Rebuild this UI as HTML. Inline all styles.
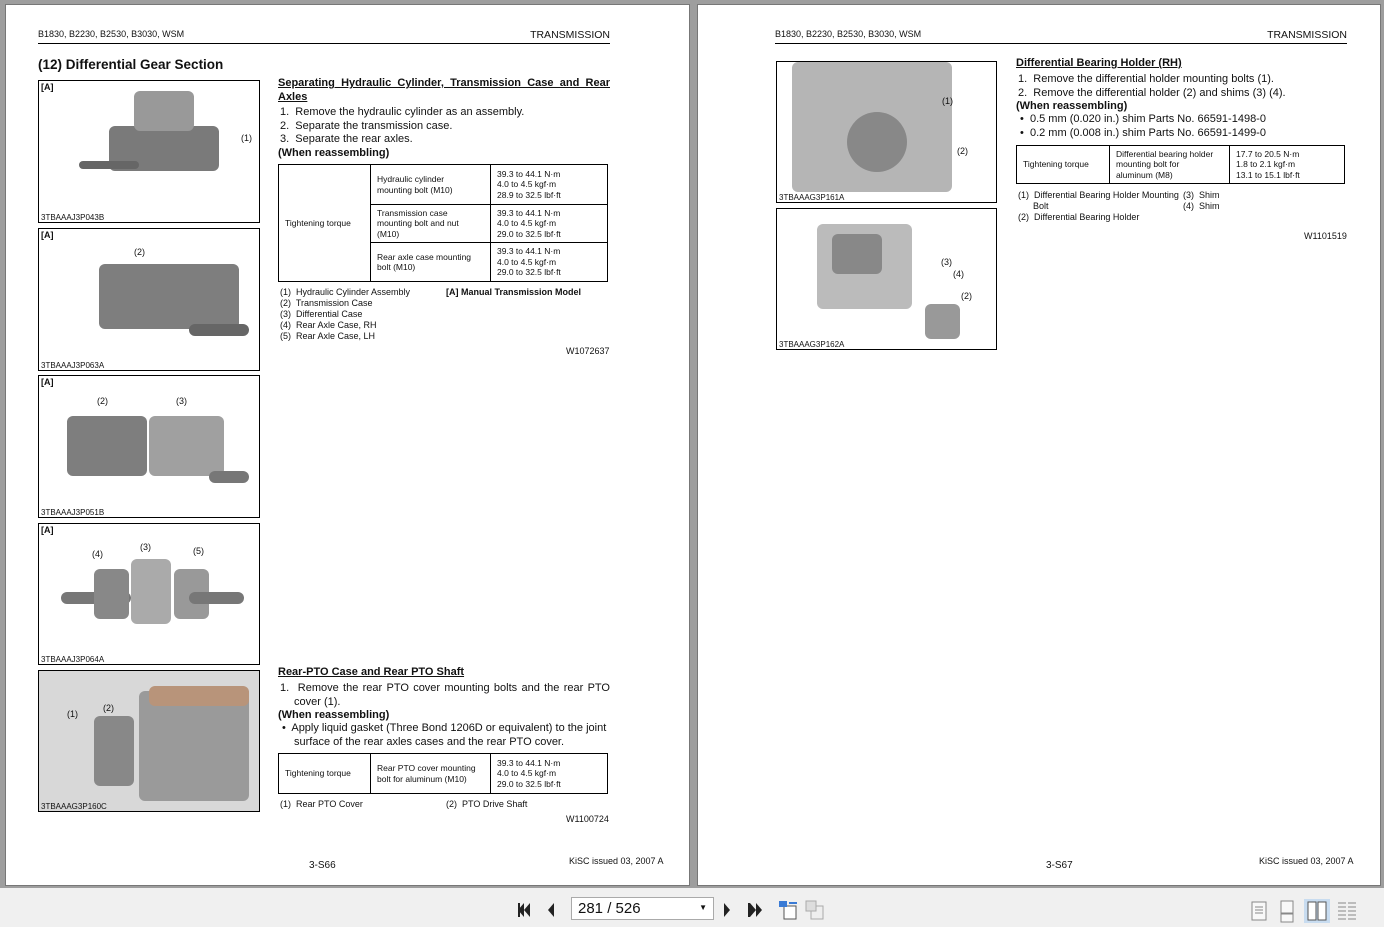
<!DOCTYPE html>
<html><head><meta charset="utf-8"><style>
*{margin:0;padding:0;box-sizing:border-box}
body{width:1384px;height:927px;background:#9e9e9e;position:relative;overflow:hidden;font-family:"Liberation Sans",Arial,sans-serif;color:#111}
.pg{position:absolute;background:#fff;top:4px;height:882px;border:1px solid #777}
.a{position:absolute;white-space:nowrap}
.s9{font-size:9px;line-height:11px}
.s10{font-size:10px}
.s11{font-size:11px;line-height:13.5px}
.hd{border-bottom:1px solid #000;height:15px}
.box{position:absolute;border:1px solid #000;background:#fff;overflow:hidden}
.box .lbl{position:absolute;left:2px;top:1px;font-size:9px;font-weight:bold}
.box .cap{position:absolute;left:2px;bottom:0;font-size:8px}
.obj{position:absolute;background:#888;border-radius:6px}
table{position:absolute;border-collapse:collapse;font-size:8.5px;line-height:10.5px}
td{border:1px solid #000;padding:2px 6px;vertical-align:middle}
u{text-decoration:underline}
.tb{position:absolute;left:0;top:888px;width:1384px;height:39px;background:#f0f0f0}
</style></head><body>

<div class="pg" style="left:5px;width:685px"></div>
<div class="pg" style="left:697px;width:684px"></div>

<!-- LEFT PAGE -->
<div class="a s9 hd" style="left:38px;top:29px;width:572px"><span>B1830, B2230, B2530, B3030, WSM</span><span style="position:absolute;right:0;top:1px;font-size:10.5px">TRANSMISSION</span></div>
<div class="a" style="left:38px;top:57px;font-size:13.5px;font-weight:bold">(12) Differential Gear Section</div>

<div class="box" style="left:38px;top:80px;width:222px;height:143px"><div class="lbl">[A]</div>
<div class="obj" style="left:70px;top:45px;width:110px;height:45px;background:#7a7a7a"></div>
<div class="obj" style="left:95px;top:10px;width:60px;height:40px;background:#999"></div>
<div class="obj" style="left:40px;top:80px;width:60px;height:8px;background:#666"></div>
<div class="a s9" style="left:202px;top:52px">(1)</div>
<div class="cap">3TBAAAJ3P043B</div></div>

<div class="box" style="left:38px;top:228px;width:222px;height:143px"><div class="lbl">[A]</div>
<div class="obj" style="left:60px;top:35px;width:140px;height:65px;background:#7e7e7e"></div>
<div class="obj" style="left:150px;top:95px;width:60px;height:12px;background:#666"></div>
<div class="a s9" style="left:95px;top:18px">(2)</div>
<div class="cap">3TBAAAJ3P063A</div></div>

<div class="box" style="left:38px;top:375px;width:222px;height:143px"><div class="lbl">[A]</div>
<div class="obj" style="left:28px;top:40px;width:80px;height:60px;background:#7e7e7e"></div>
<div class="obj" style="left:110px;top:40px;width:75px;height:60px;background:#a0a0a0"></div>
<div class="obj" style="left:170px;top:95px;width:40px;height:12px;background:#777"></div>
<div class="a s9" style="left:58px;top:20px">(2)</div><div class="a s9" style="left:137px;top:20px">(3)</div>
<div class="cap">3TBAAAJ3P051B</div></div>

<div class="box" style="left:38px;top:523px;width:222px;height:142px"><div class="lbl">[A]</div>
<div class="obj" style="left:22px;top:68px;width:70px;height:12px;background:#777"></div>
<div class="obj" style="left:55px;top:45px;width:35px;height:50px;background:#888"></div>
<div class="obj" style="left:92px;top:35px;width:40px;height:65px;background:#aaa"></div>
<div class="obj" style="left:135px;top:45px;width:35px;height:50px;background:#999"></div>
<div class="obj" style="left:150px;top:68px;width:55px;height:12px;background:#777"></div>
<div class="a s9" style="left:53px;top:25px">(4)</div><div class="a s9" style="left:101px;top:18px">(3)</div><div class="a s9" style="left:154px;top:22px">(5)</div>
<div class="cap">3TBAAAJ3P064A</div></div>

<div class="box" style="left:38px;top:670px;width:222px;height:142px">
<div class="obj" style="left:0;top:0;width:222px;height:142px;background:#d8d8d8;border-radius:0"></div>
<div class="obj" style="left:100px;top:20px;width:110px;height:110px;background:#9a9a9a"></div>
<div class="obj" style="left:55px;top:45px;width:40px;height:70px;background:#888"></div>
<div class="obj" style="left:110px;top:15px;width:100px;height:20px;background:#b8947a"></div>
<div class="a s9" style="left:28px;top:38px">(1)</div><div class="a s9" style="left:64px;top:32px">(2)</div>
<div class="cap">3TBAAAG3P160C</div></div>

<div class="a s11" style="left:278px;top:77px;width:332px;font-weight:bold;white-space:normal;text-align:justify"><u>Separating Hydraulic Cylinder, Transmission Case and Rear Axles</u></div>
<div class="a s11" style="left:280px;top:106px">1.&nbsp; Remove the hydraulic cylinder as an assembly.<br>2.&nbsp; Separate the transmission case.<br>3.&nbsp; Separate the rear axles.</div>
<div class="a s11" style="left:278px;top:147px;font-weight:bold">(When reassembling)</div>
<table style="left:278px;top:164px;width:330px">
<tr style="height:40px"><td rowspan="3" style="width:92px">Tightening torque</td><td style="width:120px">Hydraulic cylinder<br>mounting bolt (M10)</td><td>39.3 to 44.1 N·m<br>4.0 to 4.5 kgf·m<br>28.9 to 32.5 lbf·ft</td></tr>
<tr style="height:38px"><td>Transmission case<br>mounting bolt and nut<br>(M10)</td><td>39.3 to 44.1 N·m<br>4.0 to 4.5 kgf·m<br>29.0 to 32.5 lbf·ft</td></tr>
<tr style="height:39px"><td>Rear axle case mounting<br>bolt (M10)</td><td>39.3 to 44.1 N·m<br>4.0 to 4.5 kgf·m<br>29.0 to 32.5 lbf·ft</td></tr>
</table>
<div class="a s9" style="left:280px;top:287px">(1)&nbsp; Hydraulic Cylinder Assembly<br>(2)&nbsp; Transmission Case<br>(3)&nbsp; Differential Case<br>(4)&nbsp; Rear Axle Case, RH<br>(5)&nbsp; Rear Axle Case, LH</div>
<div class="a s9" style="left:446px;top:287px;font-weight:bold">[A] Manual Transmission Model</div>
<div class="a s9" style="left:566px;top:346px">W1072637</div>

<div class="a s11" style="left:278px;top:666px;font-weight:bold"><u>Rear-PTO Case and Rear PTO Shaft</u></div>
<div class="a s11" style="left:280px;top:682px;width:330px;white-space:normal;text-align:justify;padding-left:14px;text-indent:-14px">1.&nbsp; Remove the rear PTO cover mounting bolts and the rear PTO cover (1).</div>
<div class="a s11" style="left:278px;top:709px;font-weight:bold">(When reassembling)</div>
<div class="a s11" style="left:282px;top:722px;width:328px;white-space:normal;padding-left:12px;text-indent:-12px">•&nbsp; Apply liquid gasket (Three Bond 1206D or equivalent) to the joint surface of the rear axles cases and the rear PTO cover.</div>
<table style="left:278px;top:753px;width:330px">
<tr style="height:40px"><td style="width:92px">Tightening torque</td><td style="width:120px">Rear PTO cover mounting<br>bolt for aluminum (M10)</td><td>39.3 to 44.1 N·m<br>4.0 to 4.5 kgf·m<br>29.0 to 32.5 lbf·ft</td></tr>
</table>
<div class="a s9" style="left:280px;top:799px">(1)&nbsp; Rear PTO Cover</div>
<div class="a s9" style="left:446px;top:799px">(2)&nbsp; PTO Drive Shaft</div>
<div class="a s9" style="left:566px;top:814px">W1100724</div>
<div class="a s10" style="left:309px;top:860px">3-S66</div>
<div class="a s9" style="left:569px;top:856px">KiSC issued 03, 2007 A</div>

<!-- RIGHT PAGE -->
<div class="a s9 hd" style="left:775px;top:29px;width:572px"><span>B1830, B2230, B2530, B3030, WSM</span><span style="position:absolute;right:0;top:1px;font-size:10.5px">TRANSMISSION</span></div>
<div class="box" style="left:776px;top:61px;width:221px;height:142px">
<div class="obj" style="left:15px;top:0;width:160px;height:130px;background:#b5b5b5"></div>
<div class="obj" style="left:70px;top:50px;width:60px;height:60px;background:#888;border-radius:50%"></div>
<div class="a s9" style="left:165px;top:34px">(1)</div><div class="a s9" style="left:180px;top:84px">(2)</div>
<div class="cap">3TBAAAG3P161A</div></div>
<div class="box" style="left:776px;top:208px;width:221px;height:142px">
<div class="obj" style="left:40px;top:15px;width:95px;height:85px;background:#bbb"></div>
<div class="obj" style="left:55px;top:25px;width:50px;height:40px;background:#888"></div>
<div class="obj" style="left:148px;top:95px;width:35px;height:35px;background:#999"></div>
<div class="a s9" style="left:164px;top:48px">(3)</div><div class="a s9" style="left:176px;top:60px">(4)</div><div class="a s9" style="left:184px;top:82px">(2)</div>
<div class="cap">3TBAAAG3P162A</div></div>

<div class="a s11" style="left:1016px;top:57px;font-weight:bold"><u>Differential Bearing Holder (RH)</u></div>
<div class="a s11" style="left:1018px;top:73px">1.&nbsp; Remove the differential holder mounting bolts (1).<br>2.&nbsp; Remove the differential holder (2) and shims (3) (4).</div>
<div class="a s11" style="left:1016px;top:100px;font-weight:bold">(When reassembling)</div>
<div class="a s11" style="left:1020px;top:113px">•&nbsp; 0.5 mm (0.020 in.) shim Parts No. 66591-1498-0<br>•&nbsp; 0.2 mm (0.008 in.) shim Parts No. 66591-1499-0</div>
<table style="left:1016px;top:145px;width:329px">
<tr style="height:38px"><td style="width:93px">Tightening torque</td><td style="width:120px">Differential bearing holder<br>mounting bolt for<br>aluminum (M8)</td><td>17.7 to 20.5 N·m<br>1.8 to 2.1 kgf·m<br>13.1 to 15.1 lbf·ft</td></tr>
</table>
<div class="a s9" style="left:1018px;top:190px">(1)&nbsp; Differential Bearing Holder Mounting<br>&nbsp;&nbsp;&nbsp;&nbsp;&nbsp; Bolt<br>(2)&nbsp; Differential Bearing Holder</div>
<div class="a s9" style="left:1183px;top:190px">(3)&nbsp; Shim<br>(4)&nbsp; Shim</div>
<div class="a s9" style="left:1304px;top:231px">W1101519</div>
<div class="a s10" style="left:1046px;top:860px">3-S67</div>
<div class="a s9" style="left:1259px;top:856px">KiSC issued 03, 2007 A</div>

<!-- TOOLBAR -->
<div class="tb">
<svg class="a" style="left:516px;top:13px" width="60" height="18"><path d="M2 9L8 2V16Z M8 9L14 2V16Z" fill="#222"/><rect x="2" y="2" width="2" height="14" fill="#222"/><path d="M32 9L38 2V16Z" fill="#222"/></svg>
<div class="a" style="left:571px;top:9px;width:143px;height:23px;background:#fff;border:1px solid #aaa;font-size:15px;padding:2px 6px">281 / 526<span style="position:absolute;right:6px;top:5px;font-size:8px">▼</span></div>
<svg class="a" style="left:722px;top:13px" width="48" height="18"><path d="M2 2L8 9L2 16Z M28 2L34 9L28 16Z M34 2L40 9L34 16Z" fill="#222"/><rect x="26" y="2" width="2" height="14" fill="#222"/></svg>
<svg class="a" style="left:777px;top:11px" width="50" height="22"><rect x="7" y="7" width="12" height="13" fill="#fff" stroke="#555"/><rect x="2" y="2" width="8" height="6" fill="#3a7bd5"/><path d="M12 4h8" stroke="#3a7bd5" stroke-width="2"/><rect x="34" y="7" width="12" height="13" fill="#eee" stroke="#aaa"/><rect x="29" y="2" width="10" height="10" fill="#ddd" stroke="#aaa"/></svg>
<svg class="a" style="left:1250px;top:11px" width="112" height="24"><rect x="2" y="3" width="14" height="18" fill="#f8f8f8" stroke="#888"/><path d="M5 8h8M5 11h8M5 14h8" stroke="#888"/><rect x="31" y="2" width="12" height="12" fill="#f8f8f8" stroke="#888"/><rect x="31" y="15" width="12" height="8" fill="#f8f8f8" stroke="#888"/><rect x="54" y="0" width="26" height="24" fill="#c8dcf0"/><rect x="58" y="3" width="8" height="18" fill="#fff" stroke="#555"/><rect x="68" y="3" width="8" height="18" fill="#fff" stroke="#555"/><path d="M88 4h8M88 8h8M88 12h8M88 16h8M88 20h8M98 4h8M98 8h8M98 12h8M98 16h8M98 20h8" stroke="#888"/></svg>
</div>
</body></html>
